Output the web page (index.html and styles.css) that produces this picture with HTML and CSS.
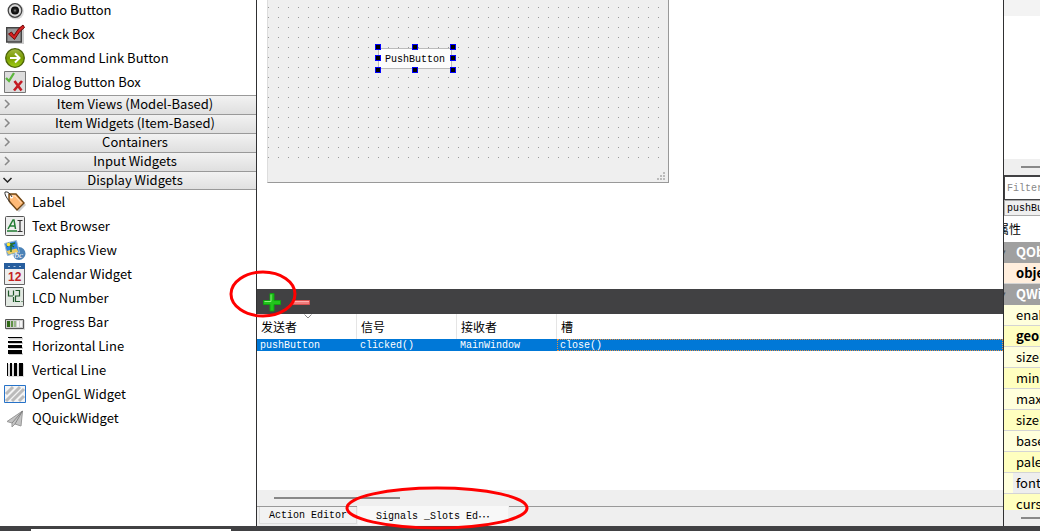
FILE: index.html
```html
<!DOCTYPE html>
<html lang="en">
<head>
<meta charset="utf-8">
<title>Form Designer</title>
<link rel="stylesheet" href="styles.css">
</head>
<body>
<div class="app">
  <aside class="widgets">
    <ul class="list list-top">
      <li><svg class="icon" viewBox="0 0 24 24"><defs><radialGradient id="rad"><stop offset="0" stop-color="#888"/><stop offset=".4" stop-color="#222"/><stop offset="1" stop-color="#000"/></radialGradient></defs><circle cx="13" cy="13.500" r="8" fill="#ddd"/><circle cx="12" cy="12.500" r="6.800" fill="#d8d8d8" stroke="#444" stroke-width="1.300"/><circle cx="12" cy="12.500" r="4" fill="url(#rad)"/></svg>Radio Button</li>
      <li><svg class="icon" viewBox="0 0 24 24"><path d="M5 7h16v15H5z" fill="#ccc"/><path d="M3.700 5.700h14.600v14.300H3.700z" fill="#999" stroke="#444" stroke-width="1.400"/><path d="M5.500 12l3-2 2.500 3.500Q15 6 20 3l1.500 2.500Q16 9 11.500 17.500z" fill="#d62020" stroke="#6f0808"/></svg>Check Box</li>
      <li><svg class="icon" viewBox="0 0 24 24"><defs><linearGradient id="grn" x2="0" y2="1"><stop offset="0" stop-color="#a4b947"/><stop offset=".5" stop-color="#789b00"/><stop offset="1" stop-color="#a2cf18"/></linearGradient></defs><circle cx="12" cy="12" r="9.300" fill="url(#grn)" stroke="#4d6508" stroke-width="1.300"/><path d="M7 12h9M12 7.500l4.500 4.500-4.500 4.500" fill="none" stroke="#fff" stroke-width="2"/></svg>Command Link Button</li>
      <li><svg class="icon" viewBox="0 0 24 24"><path d="M1.500 1.500h21v21h-21z" fill="#ddd" stroke="#777"/><path d="M3 8l3 3 5-8" fill="none" stroke="#5cb63d" stroke-width="2.300"/><path d="M11.500 11l7 9.500M19 11l-8 9.500" stroke="#c41b24" stroke-width="2.600"/></svg>Dialog Button Box</li>
    </ul>
    <nav class="groups">
      <button type="button"><svg class="chev" viewBox="0 0 14 14"><path d="M5 3l4 4-4 4"/></svg><span>Item Views (Model-Based)</span></button>
      <button type="button"><svg class="chev" viewBox="0 0 14 14"><path d="M5 3l4 4-4 4"/></svg><span>Item Widgets (Item-Based)</span></button>
      <button type="button"><svg class="chev" viewBox="0 0 14 14"><path d="M5 3l4 4-4 4"/></svg><span>Containers</span></button>
      <button type="button"><svg class="chev" viewBox="0 0 14 14"><path d="M5 3l4 4-4 4"/></svg><span>Input Widgets</span></button>
      <button type="button" class="open"><svg class="chev" viewBox="0 0 14 14"><path d="M3.500 5l4 4 4-4"/></svg><span>Display Widgets</span></button>
    </nav>
    <ul class="list">
      <li><svg class="icon" viewBox="0 0 24 24"><path d="M8 6l6-1 9 10-7 7L6 13z" fill="#ccc"/><path d="M6 4h7l8 9-7 7-8-9z" fill="#ffba77" stroke="#704513" stroke-width="1.400"/><path d="M8 6h4l6.500 7" fill="none" stroke="#ffe2c2"/><circle cx="8.500" cy="7" r="1.500" fill="#fff"/><path d="M9 7Q6 1 2 2q-1 3 5 10" fill="none" stroke="#333"/></svg>Label</li>
      <li><svg class="icon" viewBox="0 0 24 24"><rect x="2.500" y="2.500" width="19" height="19" rx="1" fill="#eee" stroke="#555"/><path d="M4 17h10M5 15l5-9h1l1.500 9M7 12h5" fill="none" stroke="#217b32" stroke-width="1.500"/><path d="M14.500 6.500h5M17 6.500v11M14.500 17.500h5" stroke="#333" stroke-width="1.200" fill="none"/></svg>Text Browser</li>
      <li><svg class="icon" viewBox="0 0 24 24"><circle cx="16" cy="15.500" r="6.500" fill="#4c83b8"/><path d="M1.500 5.500l12-3 3 12-12 3z" fill="#2d82dc" stroke="#a7bdd2"/><path d="M3.500 13l10-2.500 2 3.500-10 2.500z" fill="#eacb60"/><path d="M8 5v9M4 8l8-3M5 5l6 4" stroke="#276d25" stroke-width="1.400"/><circle cx="5.500" cy="6.500" r="1.800" fill="#ffe53b"/><text x="7" y="20" class="abc">abc</text></svg>Graphics View</li>
      <li><svg class="icon" viewBox="0 0 24 24"><path d="M1.500 2.500h20v20h-20z" fill="#eee" stroke="#666"/><path d="M1 1h21v6H1z" fill="#275e9e"/><path d="M5 4.500h2M10.500 4.500h2M16 4.500h2" stroke="#a8c4e2"/><text x="5" y="19" class="date">12</text></svg>Calendar Widget</li>
      <li><svg class="icon" viewBox="0 0 24 24"><rect x="2.500" y="1.500" width="18" height="19" rx="1" fill="#e2e9e2" stroke="#555"/><path d="M5.500 4.500v5.500h4.500M10.500 4.500v5M10.500 11v5M12.500 4.500h4v5.500h-4v5.500h4.500M18.500 15.500h1" fill="none" stroke="#20582a" stroke-width="1.200"/></svg>LCD Number</li>
      <li><svg class="icon" viewBox="0 0 24 24"><path d="M3 10h19v10H3z" fill="#ddd"/><path d="M2.500 9.500h18v9h-18z" fill="#ccc" stroke="#555"/><path d="M4 11h3v6H4z" fill="#2e6816"/><path d="M8 11h2v6H8z" fill="#5f9145"/><path d="M11 11h2v6h-2z" fill="#96b686"/><path d="M14 11h2v6h-2zM17 11h2v6h-2z" fill="#f4f4f4"/></svg>Progress Bar</li>
      <li><svg class="icon" viewBox="0 0 24 24"><path d="M6 4.500h14M6 9h14M6 14h14M6 20h14" stroke="#ccc" stroke-width="2"/><path d="M5 3.500h14" stroke="#000"/><path d="M5 8h14" stroke="#000" stroke-width="2"/><path d="M5 12.500h14" stroke="#000" stroke-width="3"/><path d="M5 18h14" stroke="#000" stroke-width="4"/></svg>Horizontal Line</li>
      <li><svg class="icon" viewBox="0 0 24 24"><path d="M5 6h16v13H5z" fill="#ddd"/><path d="M4.500 5v13" stroke="#000"/><path d="M8 5v13" stroke="#000" stroke-width="2"/><path d="M12.500 5v13" stroke="#000" stroke-width="3"/><path d="M18 5v13" stroke="#000" stroke-width="4"/></svg>Vertical Line</li>
      <li><svg class="icon" viewBox="0 0 24 24"><path d="M1.500 3.500h21v17h-21z" fill="#f4f4f4" stroke="#2672c8"/><path d="M3 12L10 5M3 19L17 5M9 19L21 7M16 19l5-5" stroke="#bbb" stroke-width="3"/></svg>OpenGL Widget</li>
      <li><svg class="icon" viewBox="0 0 24 24"><path d="M19.500 5L4 15.500l5 1.500v4l3-3 6 2z" fill="#c4c4c4" stroke="#999"/><path d="M19.500 5L9 17M19.500 5L12 18" stroke="#777" stroke-width=".8"/></svg>QQuickWidget</li>
    </ul>
  </aside>

  <main class="center">
    <section class="canvas">
      <div class="form">
        <div class="dots"></div>
        <div class="selected">
          <button type="button" class="push">PushButton</button>
          <i class="h nw"></i><i class="h n"></i><i class="h ne"></i><i class="h w"></i><i class="h e"></i><i class="h sw"></i><i class="h s"></i><i class="h se"></i>
        </div>
        <svg class="grip" viewBox="0 0 9 9"><path d="M6 0h2v2H6zM3 3h2v2H3zM6 3h2v2H6zM0 6h2v2H0zM3 6h2v2H3zM6 6h2v2H6z"/></svg>
      </div>
    </section>
    <div class="toolbar">
      <button type="button" aria-label="Add"><svg viewBox="0 0 20 20"><path d="M8 1.500h4v7h6.500v4H12v6.500H8v-6.500H1.500v-4H8z" fill="#21c51b" stroke="#0fa30f"/><path d="M9 2.500v7H2.500" fill="none" stroke="#8bf27b"/></svg></button>
      <button type="button" aria-label="Remove"><svg viewBox="0 0 20 20"><path d="M1.500 8.500h17v4h-17z" fill="#f17d7d" stroke="#d85151"/><path d="M2 9.500h16" stroke="#ffb0b0"/></svg></button>
    </div>
    <div class="connections">
      <table>
        <thead><tr><th>发送者<svg class="sort" viewBox="0 0 8 5"><path d="M.5.5L4 4 7.500.5"/></svg></th><th>信号</th><th>接收者</th><th>槽</th></tr></thead>
        <tbody><tr><td>pushButton</td><td>clicked()</td><td>MainWindow</td><td class="focus">close()</td></tr></tbody>
      </table>
    </div>
    <div class="scroll"><div class="thumb"></div></div>
    <div class="tabs">
      <button type="button">Action Editor</button>
      <button type="button" class="active">Signals _Slots Ed<span class="more">⋯</span></button>
    </div>
  </main>

  <aside class="inspector">
    <div class="strip"></div>
    <div class="tree"></div>
    <div class="scroll short"><div class="thumb"></div></div>
    <input class="filter" type="text" placeholder="Filter" aria-label="Filter">
    <div class="object">pushButton</div>
    <div class="prop-head"><span>属性</span></div>
    <ul class="props">
      <li class="cat"><b>▾</b>QObject</li>
      <li class="peach bold">objectName</li>
      <li class="cat"><b>▾</b>QWidget</li>
      <li>enabled</li>
      <li class="bold"><b>›</b>geometry</li>
      <li><b>›</b>sizePolicy</li>
      <li><b>›</b>minimumSize</li>
      <li><b>›</b>maximumSize</li>
      <li><b>›</b>sizeIncrement</li>
      <li><b>›</b>baseSize</li>
      <li>palette</li>
      <li class="current"><b>›</b>font</li>
      <li>cursor</li>
    </ul>
    <div class="scroll short"><div class="thumb"></div></div>
  </aside>

  <footer class="status"><div></div></footer>
  <svg class="mark mark-add" viewBox="0 0 68 50"><ellipse cx="34" cy="25" rx="32" ry="22"/></svg>
  <svg class="mark mark-tab" viewBox="0 0 184 46"><ellipse cx="92" cy="23" rx="90" ry="20"/></svg>
</div>
</body>
</html>
```
FILE: styles.css
```css
* { box-sizing: border-box; }
body {
  margin: 0;
  overflow: hidden;
  font: 13px/24px "Noto Sans CJK SC", "Noto Sans", sans-serif;
  color: #000;
  background: #fff;
}
button, input { font: inherit; color: inherit; padding: 0; margin: 0; border: 0; border-radius: 0; background: none; }
ul { list-style: none; margin: 0; padding: 0; }
svg { display: block; }

.app {
  position: relative;
  height: 100vh;
  display: grid;
  grid-template-columns: 257px minmax(0, 1fr) 37px;
  grid-template-rows: minmax(0, 1fr) 5px;
}

/* Widget box */
.widgets { border-right: 1px solid #303032; overflow: hidden; }
.list-top { margin-top: -2px; padding-bottom: 1px; }
.list li { display: flex; align-items: center; gap: 5px; height: 24px; padding-left: 3px; white-space: nowrap; }
.icon { width: 24px; height: 24px; flex: none; }
.abc { font: italic 9px "Liberation Serif", serif; fill: #fff; }
.date { font: bold 12px "Liberation Sans", sans-serif; fill: #c42323; }
.groups button {
  display: flex;
  align-items: center;
  width: 100%;
  height: 19px;
  padding-bottom: 2px;
  line-height: 16px;
  border-top: 1px solid #999;
  background: linear-gradient(#f2f2f2, #dfdfdf);
}
.groups button:last-child { box-shadow: inset 0 -1px #999; }
.groups span { flex: 1; text-align: center; }
.chev { width: 14px; height: 14px; fill: none; stroke: #888; stroke-width: 1.5; }
.open .chev { stroke: #222; }

/* Editor */
.center { display: flex; flex-direction: column; min-width: 0; font: 10px/12px "Liberation Mono", monospace; }
.canvas { height: 289px; padding-left: 10px; }
.form {
  position: relative;
  width: 402px;
  height: 183px;
  background: #efefef;
  border: 1px solid #999;
  border-width: 0 1px 1px 0;
  border-left: 1px solid #ddd;
}
.dots {
  width: 400px;
  height: 160px;
  background: linear-gradient(#efefef 7px, transparent 7px 8px, #efefef 8px) 0 0 / 10px 10px,
    linear-gradient(90deg, #999 1px, #efefef 1px) 0 0 / 10px 10px;
}
.selected { position: absolute; left: 110px; top: 48px; width: 74px; height: 21px; }
.push { width: 100%; height: 100%; padding-top: 2px; background: #fcfcfc; border: 1px solid #bbb; border-radius: 2px; }
.h { position: absolute; width: 6px; height: 6px; background: #000; border: 1px solid #00f; }
.nw, .w, .sw { left: -3px; }
.n, .s { left: 34px; }
.ne, .e, .se { right: -4px; }
.nw, .n, .ne { top: -4px; }
.w, .e { top: 7px; }
.sw, .s, .se { bottom: -4px; }
.grip { position: absolute; right: 2px; bottom: 1px; width: 9px; height: 9px; fill: #bbb; }
.toolbar { display: flex; align-items: center; gap: 9px; height: 25px; padding-left: 5px; background: #414143; }
.toolbar svg { width: 20px; height: 20px; }
.connections { flex: 1; min-height: 0; }
table { width: 100%; border-spacing: 0; table-layout: fixed; }
th, td { padding: 0 0 0 3px; text-align: left; font-weight: normal; white-space: nowrap; }
th { position: relative; width: 100px; height: 25px; padding-left: 4px; font: 12px/23px "Noto Sans CJK SC", sans-serif; border-right: 1px solid #e5e5e5; }
th:last-child { width: auto; border-right: 0; }
.sort { position: absolute; left: 47px; top: 0; width: 8px; height: 5px; fill: none; stroke: #888; }
td { height: 12px; padding-top: 1px; line-height: 11px; color: #fff; background: #0078d7; }
.focus { outline: 1px dotted #e89040; outline-offset: -1px; }
.scroll { flex: none; height: 16px; padding: 7px 0 0 17px; background: #efefef; }
.thumb { width: 126px; height: 2px; background: #888; }
.tabs { display: flex; height: 20px; padding-left: 2px; background: #efefef; border-top: 1px solid #999; }
.tabs button { width: 98px; height: 17px; padding-top: 2px; background: #f2f2f2; border: 1px solid #ddd; border-top: 0; white-space: nowrap; }
.tabs .active { display: flex; align-items: center; justify-content: center; width: 152px; height: 20px; margin-top: -1px; background: #f8f8f8; border-color: #f0f0f0; }
.more { width: 12px; font-family: "Noto Sans CJK SC", sans-serif; font-size: 12px; }

/* Object and property panels */
.inspector { display: flex; flex-direction: column; min-width: 0; overflow: hidden; border-left: 1px solid #303032; }
.strip { height: 16px; background: #f3f3f3; }
.tree { height: 143px; }
.short .thumb { width: 100%; }
.filter { width: 160px; height: 25px; padding-left: 2px; border: 1px solid #414143; border-top-width: 2px; font: 10px/20px "Liberation Mono", monospace; background: #fff; }
.filter::placeholder { color: #888; opacity: 1; }
.object { width: 160px; height: 16px; padding: 1px 0 0 2px; border: 1px solid #aaa; background: #efefef; font: 10px/14px "Liberation Mono", monospace; white-space: nowrap; }
.prop-head { display: flex; height: 26px; margin-left: -7px; font: 12px/26px "Noto Sans CJK SC", sans-serif; white-space: nowrap; }
.props { flex: 1; min-height: 0; overflow: hidden; }
.props li { position: relative; height: 21px; padding-left: 12px; line-height: 20px; background: #ffffdc; border-bottom: 1px solid #d4d4d4; white-space: nowrap; }
.props li:nth-child(odd) { background: #ffffbf; }
.props li.cat { background: #a0a0a0; color: #fff; font-weight: bold; border-color: #a0a0a0; }
.props li.peach { background: #ffeedd; }
.props li.current { background: linear-gradient(90deg, #ffffdc 9px, #eee 9px); }
.props li.bold { font-weight: bold; }
.props b { position: absolute; left: -3px; font-size: 9px; font-weight: normal; color: #555; }

.status { grid-column: 1 / -1; padding: 3px 0 0 31px; background: #414143; }
.status div { width: 200px; height: 2px; background: #fff; }

/* Annotation rings */
.mark { position: absolute; fill: none; stroke: #f00; stroke-width: 3; pointer-events: none; }
.mark-add { left: 229px; top: 269px; width: 68px; height: 50px; }
.mark-tab { left: 345px; top: 485px; width: 184px; height: 46px; }
```
